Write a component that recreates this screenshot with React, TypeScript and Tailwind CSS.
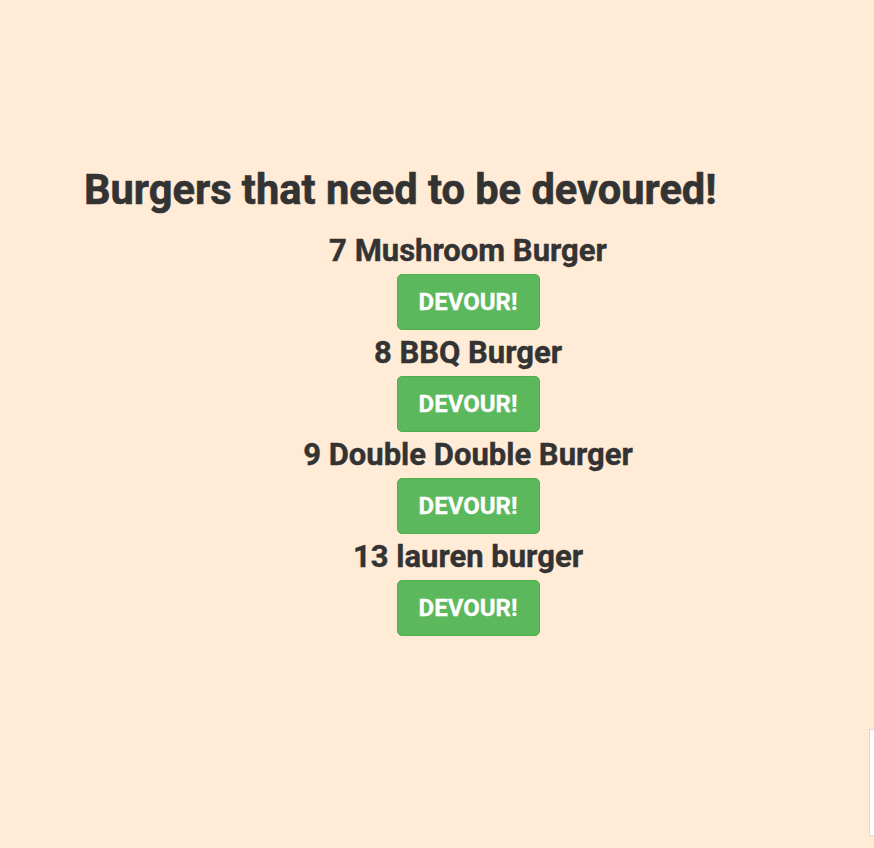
import React from 'react';

const burgers = [
  { id: 7, name: 'Mushroom Burger' },
  { id: 8, name: 'BBQ Burger' },
  { id: 9, name: 'Double Double Burger' },
  { id: 13, name: 'lauren burger' },
];

export default function App() {
  return (
    <div
      className="relative min-h-[848px] w-full overflow-hidden bg-[#ffebd6] text-[#333333]"
      style={{ fontFamily: 'Roboto, "Liberation Sans", sans-serif' }}
    >
      <div className="pt-[152px] pl-[84px]">
        <h1 className="text-[41.6px] font-bold leading-[76px] [-webkit-text-stroke:0.6px_currentColor]">
          Burgers that need to be devoured!
        </h1>
        <ul className="w-[768px] text-center">
          {burgers.map((b) => (
            <li key={b.id} className="flex flex-col items-center">
              <h3 className="text-[31px] font-bold leading-[46px] [-webkit-text-stroke:0.4px_currentColor]">
                {b.id} {b.name}
              </h3>
              <button className="h-[56px] w-[143px] rounded-[5px] border border-[#4cae4c] bg-[#5cb85c] text-[24px] font-bold text-white [-webkit-text-stroke:0.3px_currentColor]">
                DEVOUR!
              </button>
            </li>
          ))}
        </ul>
      </div>
      {/* partially visible panel at the right edge */}
      <div className="absolute left-[869px] top-[729px] h-[107px] w-[20px] border border-[#d9d9d9] bg-white" />
    </div>
  );
}
